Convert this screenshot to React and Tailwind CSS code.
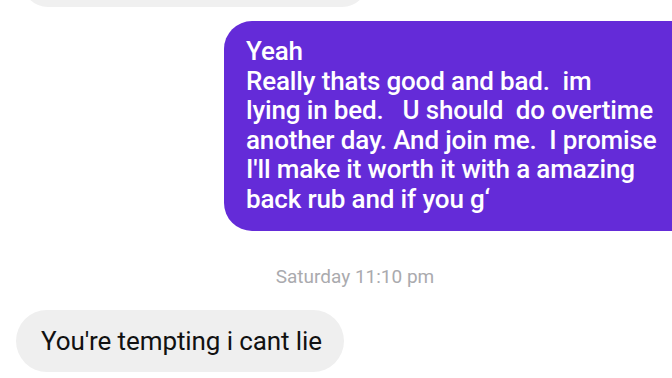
export default function App() {
  const lines = [
    'Yeah',
    'Really thats good and bad.  im',
    'lying in bed.   U should  do overtime',
    'another day. And join me.  I promise',
    "I'll make it worth it with a amazing",
    'back rub and if you g\u2018',
  ];

  return (
    <div className="w-[672px] h-[378px] overflow-hidden bg-white font-['Roboto',sans-serif]">
      {/* previous incoming bubble, cut off at top */}
      <div className="h-[7px] overflow-hidden">
        <div className="ml-[22px] w-[346px] h-[60px] -mt-[53px] rounded-[26px] bg-[#f0f0f0]" />
      </div>

      {/* outgoing bubble */}
      <div className="mt-[14px] ml-[224px] -mr-8 h-[210px] rounded-[28px] bg-[#642bd8] pl-[22px] pt-[16px] text-white text-[26px] font-medium leading-[29.5px] tracking-[-0.15px]">
        {lines.map((line) => (
          <div key={line} className="whitespace-pre">
            {line}
          </div>
        ))}
      </div>

      {/* timestamp */}
      <div className="mt-[35px] pl-[38px] text-center text-[19px] leading-[22px] text-[#aaaaae]">
        Saturday 11:10 pm
      </div>

      {/* incoming bubble */}
      <div className="mt-[22px] ml-[16px] w-[328px] h-[62px] rounded-full bg-[#efefef] flex items-center pl-[25px] text-[26px] text-[#111] tracking-[-0.1px]">
        You're tempting i cant lie
      </div>
    </div>
  );
}
